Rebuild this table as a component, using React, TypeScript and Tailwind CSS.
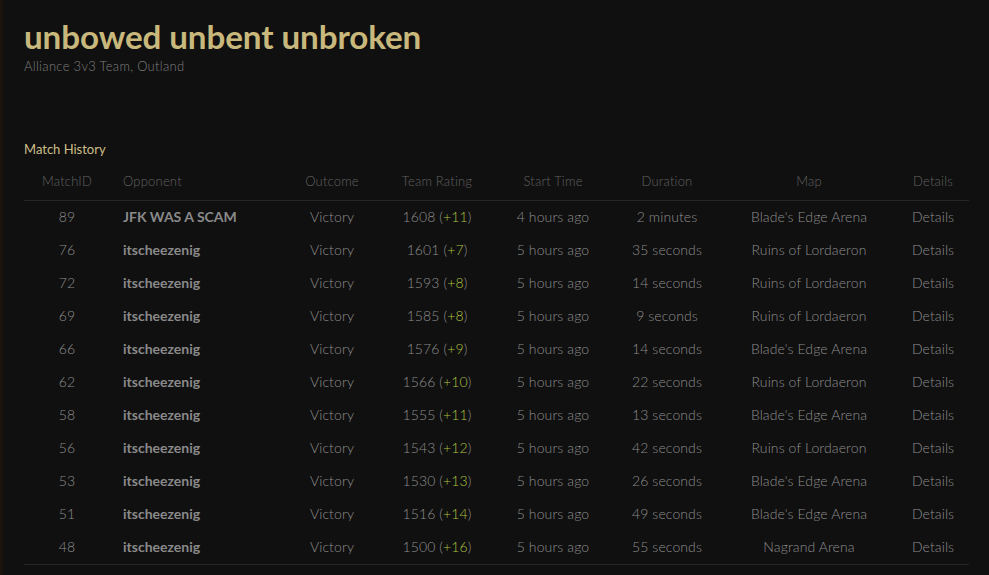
import React from "react";

type Row = {
  id: number;
  opp: string;
  rating: number;
  delta: number;
  start: string;
  dur: string;
  map: string;
};

const rows: Row[] = [
  { id: 89, opp: "JFK WAS A SCAM", rating: 1608, delta: 11, start: "4 hours ago", dur: "2 minutes", map: "Blade's Edge Arena" },
  { id: 76, opp: "itscheezenig", rating: 1601, delta: 7, start: "5 hours ago", dur: "35 seconds", map: "Ruins of Lordaeron" },
  { id: 72, opp: "itscheezenig", rating: 1593, delta: 8, start: "5 hours ago", dur: "14 seconds", map: "Ruins of Lordaeron" },
  { id: 69, opp: "itscheezenig", rating: 1585, delta: 8, start: "5 hours ago", dur: "9 seconds", map: "Ruins of Lordaeron" },
  { id: 66, opp: "itscheezenig", rating: 1576, delta: 9, start: "5 hours ago", dur: "14 seconds", map: "Blade's Edge Arena" },
  { id: 62, opp: "itscheezenig", rating: 1566, delta: 10, start: "5 hours ago", dur: "22 seconds", map: "Ruins of Lordaeron" },
  { id: 58, opp: "itscheezenig", rating: 1555, delta: 11, start: "5 hours ago", dur: "13 seconds", map: "Blade's Edge Arena" },
  { id: 56, opp: "itscheezenig", rating: 1543, delta: 12, start: "5 hours ago", dur: "42 seconds", map: "Ruins of Lordaeron" },
  { id: 53, opp: "itscheezenig", rating: 1530, delta: 13, start: "5 hours ago", dur: "26 seconds", map: "Blade's Edge Arena" },
  { id: 51, opp: "itscheezenig", rating: 1516, delta: 14, start: "5 hours ago", dur: "49 seconds", map: "Blade's Edge Arena" },
  { id: 48, opp: "itscheezenig", rating: 1500, delta: 16, start: "5 hours ago", dur: "55 seconds", map: "Nagrand Arena" },
];

const grid = "grid grid-cols-[86px_172px_100px_110px_122px_106px_178px_70px]";

export default function App() {
  return (
    <div
      className="min-h-[575px] w-full bg-[#101010] border-l-[3px] border-[#1b140e]"
      style={{ fontFamily: "Lato, 'Noto Sans', sans-serif" }}
    >
      <div className="pl-[21px] pr-[20px] pt-[16px]">
        <h1 className="text-[33.2px] leading-[40px] font-bold text-[#c8b87c] tracking-[-0.1px]">
          unbowed unbent unbroken
        </h1>
        <div className="mt-[2px] text-[13px] leading-[16px] text-[#7e7e7e] font-light tracking-[0.3px]">
          Alliance 3v3 Team, Outland
        </div>

        <div className="mt-[67px] text-[13px] leading-[16px] text-[#cdbf88]">Match History</div>

        <div className="mt-[7px] w-[945px]">
          <div className={`${grid} h-[37px] items-center text-[13px] text-[#606060] font-light tracking-[0.2px] border-b border-[#262626]`}>
            <div className="text-center">MatchID</div>
            <div className="pl-[13px]">Opponent</div>
            <div className="text-center">Outcome</div>
            <div className="text-center">Team Rating</div>
            <div className="text-center">Start Time</div>
            <div className="text-center">Duration</div>
            <div className="text-center">Map</div>
            <div className="text-center">Details</div>
          </div>
          <div className="border-b border-[#262626] -mt-[1px] pb-[1px]">
            {rows.map((r) => (
              <div key={r.id} className={`${grid} h-[33px] items-center text-[14px] leading-[16px] text-[#8e8e8e] font-light tracking-[0.1px]`}>
                <div className="text-center">{r.id}</div>
                <div className="pl-[13px] font-bold text-[#8a8a8a] tracking-normal">{r.opp}</div>
                <div className="text-center">Victory</div>
                <div className="text-center">
                  {r.rating} (<span className="text-[#adc040]">+{r.delta}</span>)
                </div>
                <div className="text-center">{r.start}</div>
                <div className="text-center">{r.dur}</div>
                <div className="text-center">{r.map}</div>
                <div className="text-center">Details</div>
              </div>
            ))}
          </div>
        </div>
      </div>
    </div>
  );
}
